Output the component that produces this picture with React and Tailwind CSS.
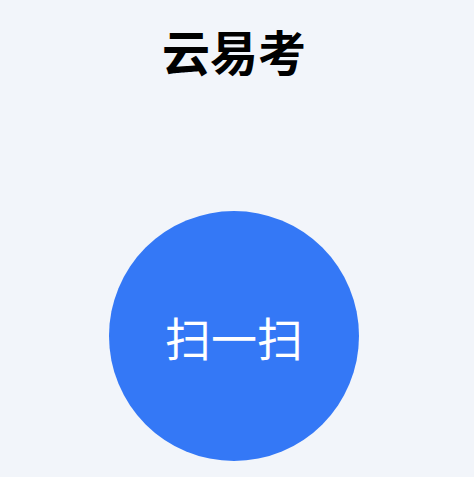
export default function App() {
  return (
    <div
      className="min-h-[477px] w-full bg-[#f2f5fa] flex flex-col items-center pr-[6px]"
      style={{ fontFamily: '"Noto Sans CJK SC", "Noto Sans", sans-serif' }}
    >
      <h1 className="mt-[26px] text-[48px] leading-[48px] font-bold text-black">云易考</h1>
      <button className="mt-[137px] w-[250px] h-[250px] rounded-full bg-[#3478f6] flex items-center justify-center text-white text-[46px] leading-none">
        扫一扫
      </button>
    </div>
  );
}
